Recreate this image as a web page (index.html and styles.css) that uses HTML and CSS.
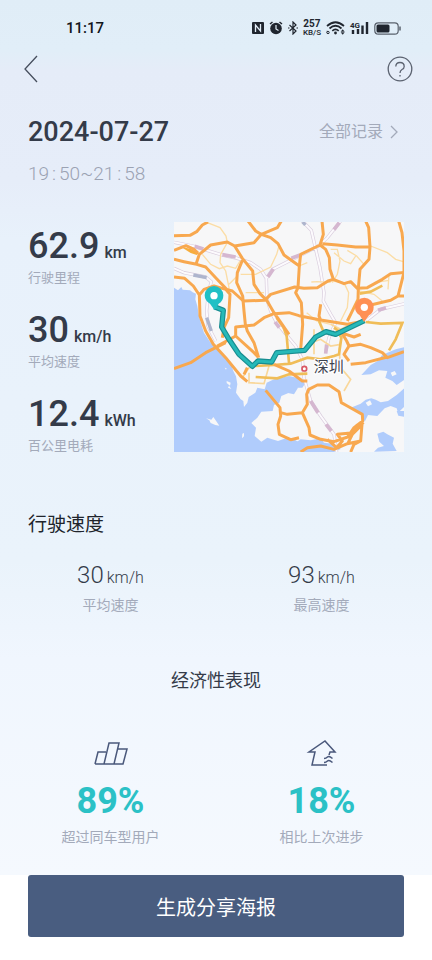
FILE: index.html
```html
<!DOCTYPE html>
<html lang="zh-CN">

<head>
    <meta charset="UTF-8">
    <meta name="viewport" content="width=device-width, initial-scale=1.0">
    <title>行驶记录</title>
    <link rel="stylesheet" href="styles.css">
</head>

<body>

    <main>
        <div class="status">
            <span class="clock">11:17</span>
            <div class="status-icons">
                <svg width="12" height="12" viewBox="0 0 12 12">
                    <rect width="12" height="12" rx="1" fill="#20262f" />
                    <path d="M3.500 10V3l5 6V2" fill="none" stroke="#e3eef8" stroke-width="1.300" />
                </svg>
                <svg width="14" height="14" viewBox="0 0 14 14">
                    <circle cx="7" cy="7.500" r="5.800" fill="#20262f" />
                    <path d="M1 3l2.500-2M13 3L10.500 1" stroke="#20262f" stroke-width="1.500" />
                    <path d="M7 4v4l2.500 1.500" fill="none" stroke="#e3eef8" stroke-width="1.200" />
                </svg>
                <svg width="10" height="14" viewBox="0 0 10 14">
                    <path d="M1.500 4l6.500 6-3 3V1l3 3-6.500 6" fill="none" stroke="#20262f" stroke-width="1.200" />
                    <path d="M0 7h1.500M8.500 7H10" stroke="#20262f" stroke-width="1.200" />
                </svg>
                <span class="net"><b>257</b><span>KB/S</span></span>
                <svg width="19" height="14" viewBox="0 0 19 14">
                    <g fill="none" stroke="#20262f" stroke-width="1.700">
                        <path d="M1 5Q9.500-2.500 18 5M3.500 7.500Q9.500 2 15.500 7.500M6.300 9.800Q9.500 7 12.700 9.800" />
                    </g>
                    <circle cx="9.500" cy="12" r="1.400" fill="#20262f" />
                    <circle cx="2" cy="11.500" r="1.200" fill="none" stroke="#20262f" />
                    <path d="M1 9.500v2M15 10.500l1.700-2 1.700 2zM15 11.500l1.700 2 1.700-2z" fill="#20262f" stroke="#20262f" stroke-width=".3" />
                </svg>
                <svg class="signal" width="19" height="14" viewBox="0 0 19 14">
                    <text x="0" y="7">4G</text>
                    <path d="M3 9v4M8 8v5M12.500 4.500V13M17 1v12" stroke="#20262f" stroke-width="2.400" />
                </svg>
                <svg width="27" height="13" viewBox="0 0 27 13">
                    <rect x=".8" y=".8" width="23.400" height="11.400" rx="3.500" fill="none" stroke="#59616c" stroke-width="1.200" />
                    <rect x="2.500" y="2.500" width="13" height="8" rx="1.500" fill="#20262f" />
                    <path d="M26 4.500v4" stroke="#59616c" stroke-width="1.500" />
                </svg>
            </div>
        </div>

        <nav>
            <button type="button" aria-label="返回">
                <svg width="14" height="28" viewBox="0 0 14 28">
                    <path d="M13 1L1 14l12 13" fill="none" stroke="#464e5d" stroke-width="1.300" />
                </svg>
            </button>
            <button type="button" aria-label="帮助">
                <svg width="26" height="26" viewBox="0 0 26 26" fill="none" stroke="#5b6270" stroke-width="1.300">
                    <circle cx="13" cy="13" r="11.800" />
                    <path d="M8.800 10.500Q8.800 6.500 13 6.500t4.200 4Q17.200 12.500 15 13.500q-2 1.300-2 3.500M13 19v1.500" />
                </svg>
            </button>
        </nav>

        <header>
            <div class="date-row">
                <h1>2024-07-27</h1>
                <a href="#">全部记录
                    <svg width="8" height="14" viewBox="0 0 8 14">
                        <path d="M1 1l6 6-6 6" fill="none" stroke="#a3aaba" stroke-width="1.300" />
                    </svg>
                </a>
            </div>
            <p class="time">19<i>:</i>50~21<i>:</i>58</p>
        </header>

        <section class="trip">
            <div class="stats">
                <div>
                    <p class="value">62.9<small>km</small></p>
                    <p class="name">行驶里程</p>
                </div>
                <div>
                    <p class="value">30<small>km/h</small></p>
                    <p class="name">平均速度</p>
                </div>
                <div>
                    <p class="value">12.4<small>kWh</small></p>
                    <p class="name">百公里电耗</p>
                </div>
            </div>

            <svg class="map" viewBox="0 3 690 690" role="img" aria-label="行驶路线">
                <rect width="693" height="696" fill="#f7f7f8" />
                <!-- sea -->
                <g fill="#b0ccfc">
                    <path d="M0 200L12 208 22 198 26 206 48 208 56 214 66 218 64 235 70 255 76 290 90 335 108 362 128 380 152 405 170 425 178 450 186 466 190 490 186 515 200 535 208 540 210 558 220 545 224 528 244 515 250 500 272 505 278 485 300 475 345 465 368 470 395 485 385 500 355 500 345 515 322 525 316 545 300 552 296 570 262 572 250 590 232 606 246 620 242 645 262 662 280 650 312 660 340 650 365 658 384 670 370 696H0z" />
                    <path d="M693 378L665 385 640 395 622 404 615 418 590 432 562 462 590 460 615 448 640 450 634 470 655 480 668 492 693 475z" />
                    <path d="M693 500L668 522 642 540 620 544 605 536 592 532 575 536 560 548 530 560 552 572 564 580 572 602 582 582 610 585 632 562 650 555 668 562 672 575 693 555z" />
                    <path d="M610 638L628 632 640 640 660 650 656 668 668 690 600 692 612 680 630 675 616 662z" />
                    <path d="M342 680L380 655 410 658 440 652 450 665 490 670 500 684 480 693H342z" />
                    <path d="M342 490h20l10 10-12 20-18-4zM668 570h25v18l-20-4z" />
                </g>
                <g fill="#f7f7f8">
                    <path d="M96 592L112 596 118 588 128 602 136 614 124 612 110 606 106 598zM152 440L158 442 156 446zM158 480L170 485 168 494 158 486zM165 494L172 504 162 500zM205 638L210 636V646L204 652zM650 455L662 450 668 460 655 466zM575 545L588 538 594 550 582 556z" />
                </g>
                <!-- railways -->
                <g id="rails">
                    <path class="rail" d="M0 64L60 76 145 102 190 112 230 125 260 145 277 172 279 235 290 270 308 305 340 345 365 375 385 415 390 470 410 540 440 585 480 640 488 693M277 172L296 145 375 105 435 74 460 50 500 0M385 0L412 28 424 80 438 140 450 215 448 240 470 280 485 305M0 142L30 155 95 168 112 182 103 215 98 270 102 315 125 360M575 300L620 265 693 248M485 305L465 350 456 390" />
                    <path class="rail-in" d="M0 64L60 76 145 102 190 112 230 125 260 145 277 172 279 235 290 270 308 305 340 345 365 375 385 415 390 470 410 540 440 585 480 640 488 693M277 172L296 145 375 105 435 74 460 50 500 0M385 0L412 28 424 80 438 140 450 215 448 240 470 280 485 305M0 142L30 155 95 168 112 182 103 215 98 270 102 315 125 360M575 300L620 265 693 248M485 305L465 350 456 390" />
                </g>
                <path d="M62 76L88 84M145 101L185 108M282 168L298 144M352 112L378 102M480 26L496 5M303 303L316 320M612 268L636 260M458 370L455 398M410 540L432 575M456 610L472 630" fill="none" stroke="#d5b7d0" stroke-width="11" />
                <path d="M386 3L394 12M58 162L98 170M98 290L112 330" fill="none" stroke="#aeb5cd" stroke-width="10" />
                <!-- small roads -->
                <path d="M100 5L138 20 156 45 160 65 140 100 138 125 155 150 165 200 160 215M85 100L110 130 136 143 160 135 185 142 198 120M200 160H245L290 138 308 100 315 75M165 190L190 165M215 215H270M412 183L430 182 470 184M475 185L490 160 498 120 490 85 470 85M480 95L510 120 530 128 545 105M520 88L548 105 570 130M590 75L640 95 665 115 688 122M475 180L510 185 524 215 520 260 500 300M555 210L600 220 625 240M600 185L645 178M645 160L642 205M398 275L428 300 470 310M375 135L400 125" fill="none" stroke="#fbdda6" stroke-width="4" />
                <path d="M205 470L225 440 250 435M225 455L225 485 270 488 285 435M400 370L440 355 470 375 500 370M420 325V400M505 340L495 385 500 440 530 475 510 510M470 310L500 325 530 310" fill="none" stroke="#f9d79a" stroke-width="5" />
                <!-- main streets -->
                <path d="M245 468L310 472 345 460 400 458M245 435L300 432 350 428 400 410 440 415 480 405 495 400 502 350 490 330M308 290L328 318 338 345 345 425M480 320L515 345M557 218L590 212 625 194M575 303L620 308 685 306 665 355 645 388M435 300L450 335" fill="none" stroke="#f0bd58" stroke-width="8" />
                <path d="M18 76L50 84 76 96 68 102 50 96z" fill="#f7ad3c" />
                <!-- highways -->
                <g class="road">
                    <path d="M0 44L48 43 68 32 85 12 102 3M0 88L36 74 60 85 72 96M66 130L76 100 110 72 160 63 182 75 240 65 262 40 310 20 322 0M0 115L30 122 68 130 95 138 125 170 158 205 175 210 208 240 272 238 290 220 362 198 390 202 430 200 462 180 478 175 510 188 530 182 550 202 580 200 625 175 650 158 693 154" />
                    <path d="M222 0L245 30 262 40 290 50 312 68 330 102 376 135 372 200 365 215 382 245 386 310 380 385M182 75L205 112 236 150 240 190 258 218 278 238 300 275 345 340M205 118L190 155 188 185 206 225 210 270 214 310 220 330 240 365 254 410M0 168L32 172 58 195 76 222 78 285 95 330 118 370 155 410 200 465 220 482M76 222L90 205 120 195 155 205 168 220 164 290 150 320 145 350M130 375L185 345 185 318 240 312 270 290 300 278 345 275 375 284 440 297 520 310 560 302M185 345L240 395 254 410" />
                    <path d="M444 0L448 40 438 72 380 100 376 135M438 72L455 85 466 110 468 145 478 175M445 68L490 72 545 78 590 78M575 0L584 20 588 78 585 115 558 145 553 202 552 235 530 280 520 300M674 0L684 35 690 90 690 154 672 225 650 238 590 252M672 225H693M440 250L435 285 440 297M500 335L540 348 560 340" />
                    <path d="M0 443L50 425 95 395 155 365M275 508L318 560 320 585 312 610 316 640 350 656 375 650M320 575L340 580 385 575 400 550 398 520 404 505 430 492 465 492 495 512 502 545 520 555 565 580 566 600 540 620 520 650M385 575L405 620 408 642 440 655 480 662 530 645 555 620 568 604M380 693L400 680 440 675 480 685 520 668 560 660 564 610M460 655L488 680 505 660 490 640 530 636M530 693L540 670 560 660M550 610L520 670" />
                    <path d="M300 430L345 450 385 480 400 480M500 330L518 360 525 375 510 400 525 420M525 375L560 370 590 380 625 395 640 410 690 392M530 430L575 425 640 408M220 440L210 460" />
                </g>
                <!-- route -->
                <path class="route-edge" d="M121 257L148 268 143 318 165 355 195 400 235 436 252 420 293 423 308 395 392 388 425 348 456 332 485 340 571 299" />
                <path class="route" d="M121 257L148 268 143 318 165 355 195 400 235 436 252 420 293 423 308 395 392 388 425 348 456 332 485 340 571 299" />
                <path d="M92 223a28 28 0 1 1 56 0q0 18-14 25l-12 20-14-20q-16-9-16-25z" fill="#20c0c5" />
                <circle cx="120" cy="224" r="11" fill="#fff" />
                <path d="M543 258a28 28 0 1 1 56 0q0 18-14 25l-15 20-13-20q-14-9-14-25z" fill="#ff9054" />
                <circle cx="571" cy="259" r="11" fill="#fff" />
                <circle cx="391" cy="443" r="7" fill="#fff" stroke="#d95763" stroke-width="5" />
                <text x="419" y="453">深圳</text>
            </svg>
        </section>

        <section class="speed">
            <h2>行驶速度</h2>
            <div class="columns">
                <div>
                    <p class="number">30<small>km/h</small></p>
                    <p class="label">平均速度</p>
                </div>
                <div>
                    <p class="number">93<small>km/h</small></p>
                    <p class="label">最高速度</p>
                </div>
            </div>
        </section>

        <section class="economy">
            <h2>经济性表现</h2>
            <div class="columns">
                <div>
                    <svg width="34" height="28" viewBox="0 0 34 28" fill="none" stroke="#4a587b" stroke-width="1.500">
                        <path d="M1 25l3-12h8M1 25h23M10 25l5-21h10l-5 21M23.500 10H33l-4 15h-6" />
                    </svg>
                    <p class="percent">89%</p>
                    <p class="label">超过同车型用户</p>
                </div>
                <div>
                    <svg width="34" height="28" viewBox="0 0 34 28" fill="none" stroke="#4a587b" stroke-width="1.500">
                        <path d="M22 26H7l3-13H4L20 2l10 11h-5l-1 3M19 19.500q2 0 3.500-1.500t5 1.500M19 23.500q2 0 3.500-1.500t5 1.500" />
                    </svg>
                    <p class="percent">18%</p>
                    <p class="label">相比上次进步</p>
                </div>
            </div>
        </section>
    </main>

    <footer>
        <button type="button" class="share">生成分享海报</button>
    </footer>

</body>

</html>
```
FILE: styles.css
```css
* {
    box-sizing: border-box;
}

body {
    margin: 0;
    background: #fff;
    color: #343b49;
    font-family: Roboto, "Noto Sans CJK SC", sans-serif;
}

h1,
h2,
p {
    margin: 0;
}

button {
    padding: 0;
    border: 0;
    background: none;
    font-family: inherit;
}

svg {
    display: block;
}

main {
    padding-bottom: 28px;
    background: linear-gradient(#e0edf7 0, #e1eef8 50px, #e5ecf8 70px, #e6edf9 180px, #e8f1fb 240px, #eaf3fb 560px, #f0f6fe 660px, #f5f9fe 100%);
}

.status {
    display: flex;
    justify-content: space-between;
    align-items: center;
    height: 56px;
    padding: 0 31px 0 66px;
}

.clock {
    color: #11151b;
    font-size: 15px;
    font-weight: 500;
}

.status-icons {
    display: flex;
    align-items: center;
    gap: 5px;
}

.net {
    display: flex;
    flex-direction: column;
    align-items: center;
    color: #20262f;
    font-size: 8px;
    font-weight: 500;
    line-height: 8px;
}

.net b {
    font-size: 10px;
    line-height: 10px;
}

.signal {
    overflow: visible;
}

.signal text {
    fill: #20262f;
    font-size: 8px;
    font-weight: bold;
}

nav {
    display: flex;
    justify-content: space-between;
    align-items: center;
    height: 26px;
    padding: 0 19px 0 24px;
}

header {
    padding: 34px 28px 0;
}

.date-row {
    display: flex;
    justify-content: space-between;
    align-items: center;
}

h1 {
    font-size: 27px;
    font-weight: 500;
    line-height: 32px;
}

.date-row a {
    display: flex;
    align-items: center;
    gap: 7px;
    margin-right: 6px;
    color: #a3aaba;
    font-size: 16px;
    line-height: 24px;
    text-decoration: none;
}

.time {
    margin-top: 14px;
    color: #9ba2b3;
    font-size: 19px;
    font-weight: 300;
    line-height: 24px;
}

.time i {
    margin: 0 3px;
    font-style: normal;
}

.trip {
    display: grid;
    grid-template-columns: 146px 1fr;
    align-items: start;
    padding: 36px 28px 0;
}

.stats {
    display: grid;
    gap: 18px;
}

.value {
    display: flex;
    align-items: baseline;
    gap: 5px;
    height: 46px;
    font-size: 36px;
    font-weight: 500;
    line-height: 48px;
}

.value small {
    font-size: 16px;
    line-height: 20px;
}

.name {
    color: #a3aaba;
    font-size: 13px;
    line-height: 20px;
}

.map {
    width: 100%;
}

.map text {
    fill: #3d4350;
    stroke: #fff;
    stroke-width: 6px;
    paint-order: stroke;
    font-size: 45px;
}

.rail,
.rail-in,
.road {
    fill: none;
    stroke-linejoin: round;
}

.rail {
    stroke: #d9cddd;
    stroke-width: 10px;
}

.rail-in {
    stroke: #fcfafd;
    stroke-width: 6px;
}

.road {
    stroke: #f8a84f;
    stroke-width: 9px;
}

.route,
.route-edge {
    fill: none;
    stroke: #27b9b8;
    stroke-width: 9px;
    stroke-linejoin: round;
}

.route-edge {
    stroke: #178d91;
    stroke-width: 16px;
}

.speed {
    padding-top: 55px;
}

h2 {
    font-size: 18px;
    font-weight: 400;
    line-height: 28px;
}

.speed h2 {
    padding-left: 28px;
    color: #20242b;
    font-size: 19px;
}

.columns {
    display: grid;
    grid-template-columns: 1fr 1fr;
    padding: 0 5px;
    text-align: center;
}

.speed .columns {
    margin-top: 20px;
}

.number {
    display: flex;
    justify-content: center;
    align-items: baseline;
    gap: 3px;
    height: 32px;
    font-size: 24px;
    font-weight: 300;
    line-height: 32px;
}

.number small {
    font-size: 16px;
    line-height: 20px;
}

.label {
    color: #a3aaba;
    font-size: 14px;
    line-height: 20px;
}

.speed .label {
    margin-top: 4px;
}

.economy {
    padding-top: 52px;
    text-align: center;
}

.economy .columns {
    margin-top: 44px;
}

.economy svg {
    margin: 0 auto;
}

.percent {
    margin: 14px 0 6px;
    color: #2bc1c6;
    font-size: 36px;
    font-weight: 700;
    line-height: 40px;
}

footer {
    padding: 0 28px 23px;
}

.share {
    display: block;
    width: 100%;
    height: 62px;
    border-radius: 3px;
    background: #495d80;
    color: #fff;
    font-size: 20px;
}
```
